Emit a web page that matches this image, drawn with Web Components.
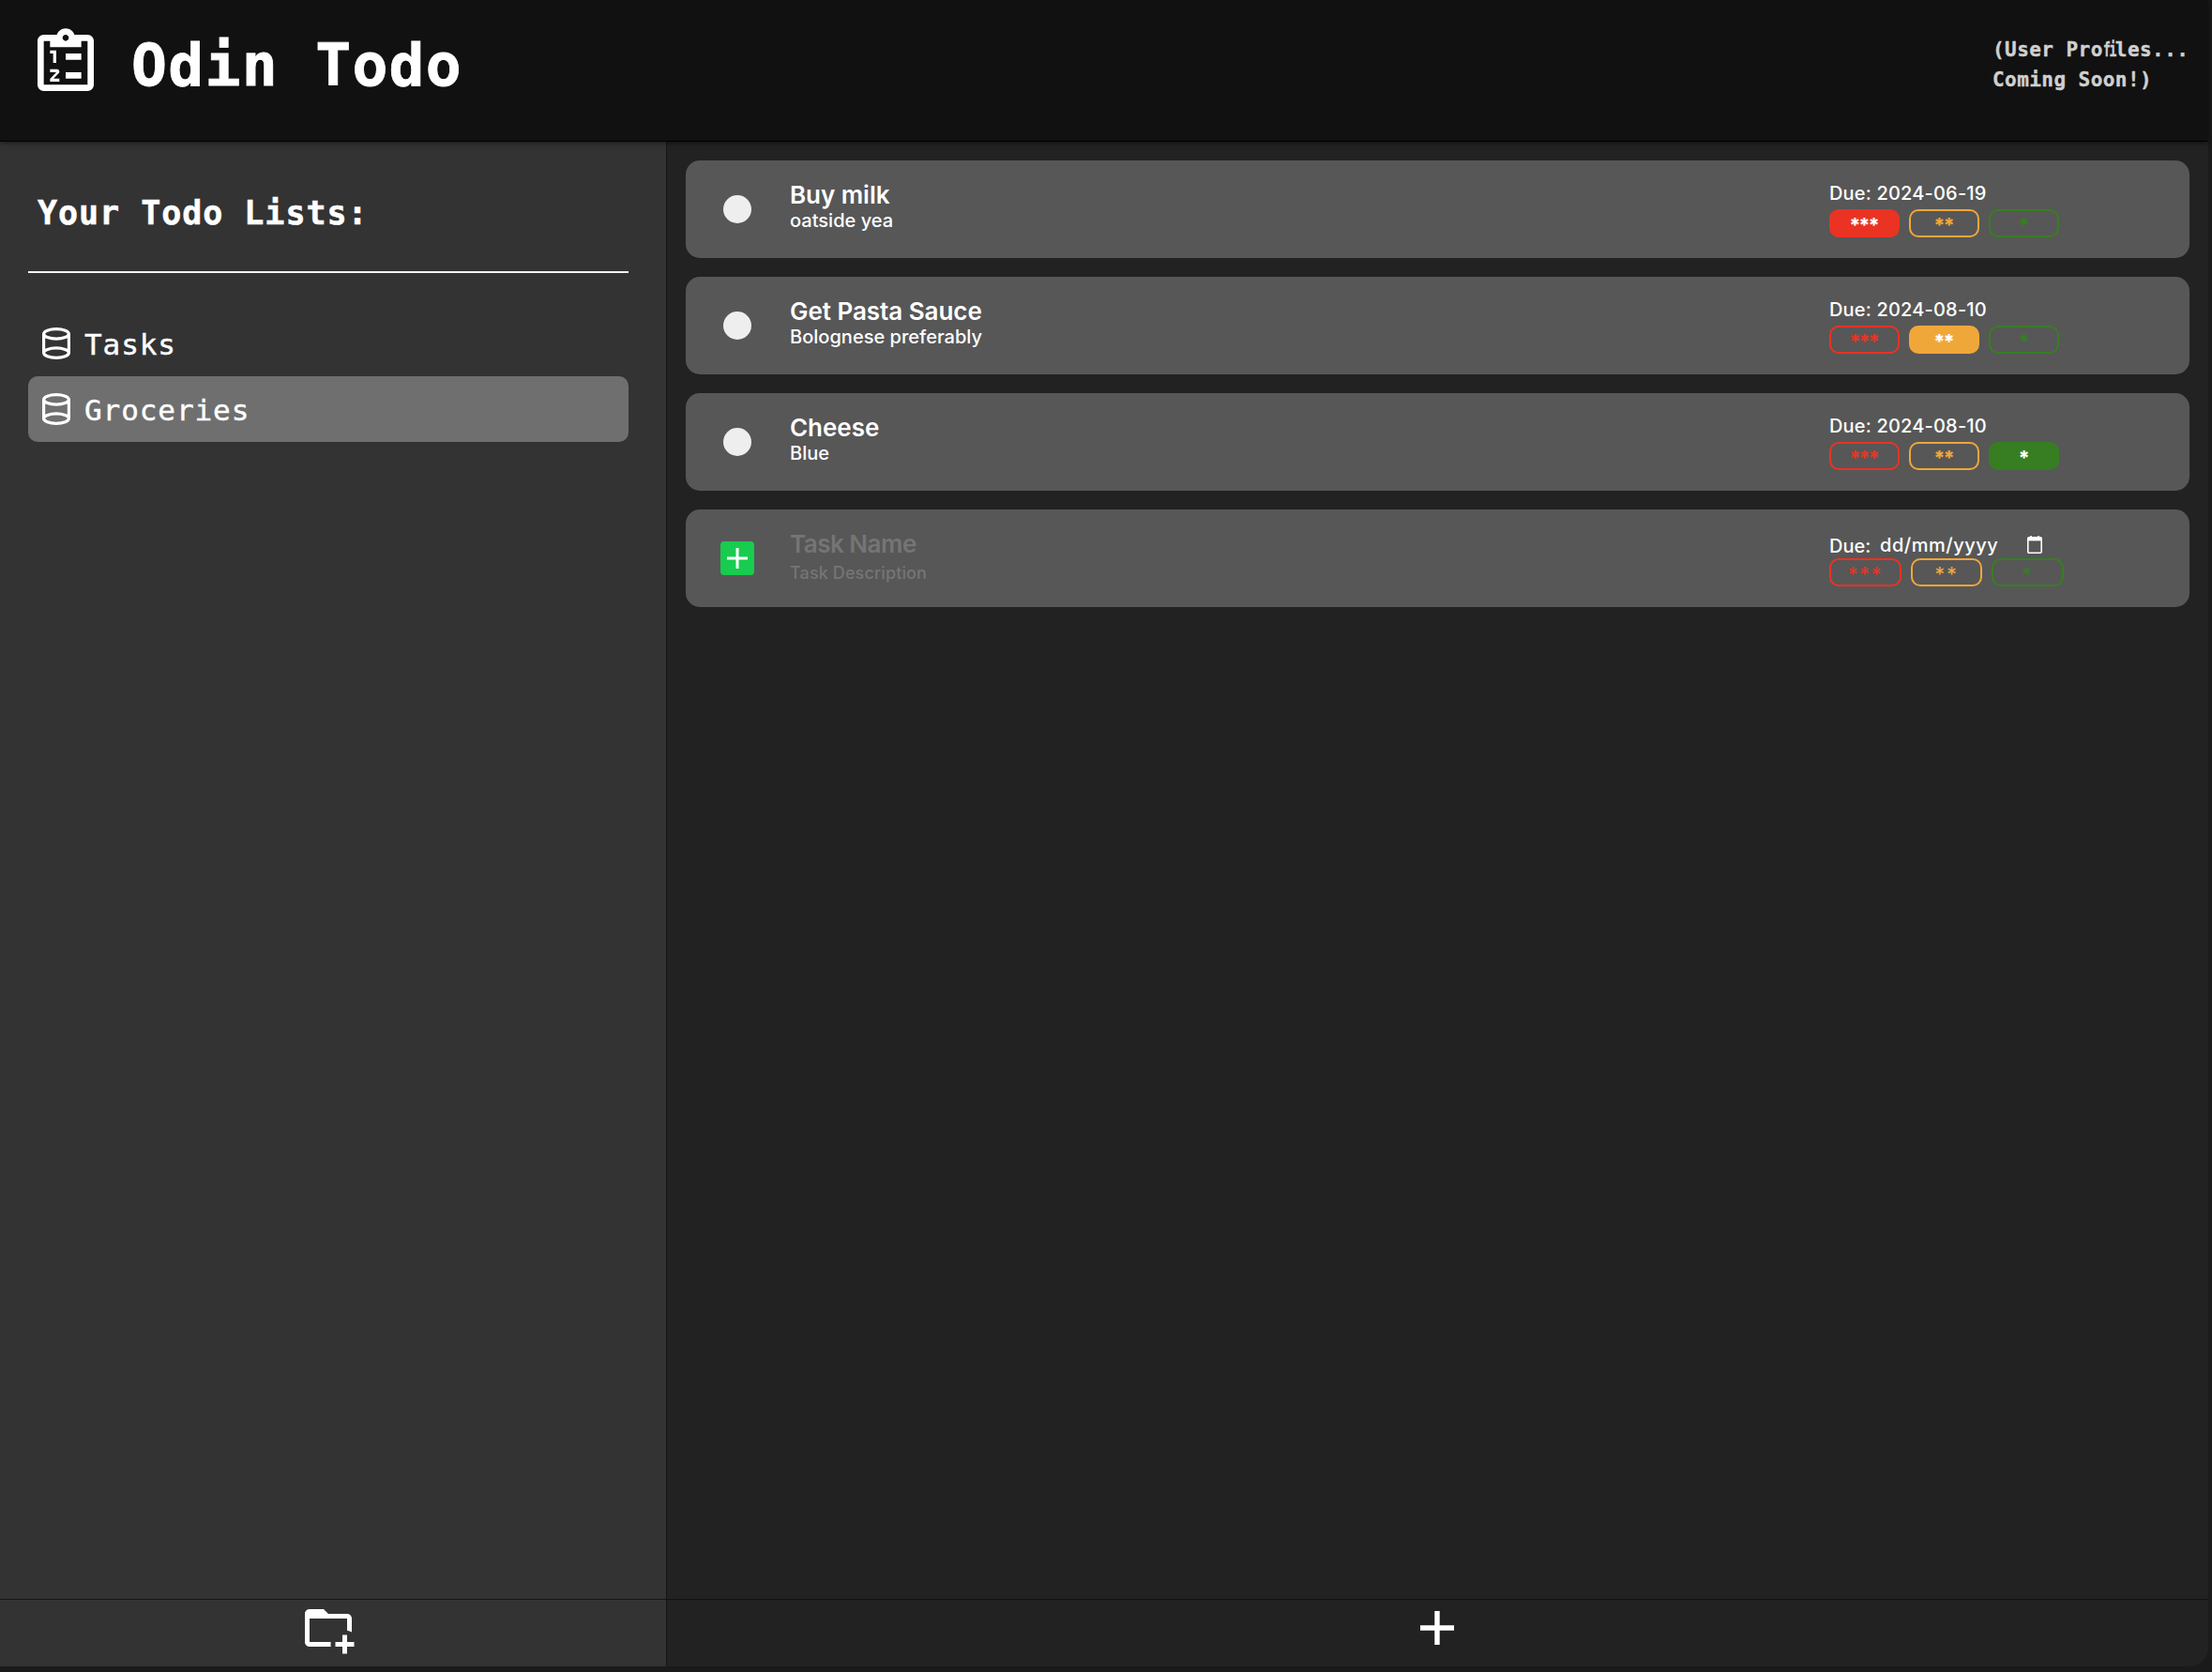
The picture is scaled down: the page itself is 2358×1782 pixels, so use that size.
<!DOCTYPE html>
<html lang="en">
<head>
<meta charset="utf-8">
<title>Odin Todo</title>
<style>
  html, body { margin: 0; height: 100%; background: #1a1a1b; overflow: hidden; }
</style>
</head>
<body>
<todo-app></todo-app>
<script>
const define = (name, html, setup) => {
  const template = document.createElement('template');
  template.innerHTML = html;
  customElements.define(name, class extends HTMLElement {
    connectedCallback() {
      if (this.shadowRoot) return;
      const root = this.attachShadow({ mode: 'open' });
      root.append(template.content.cloneNode(true));
      if (setup) setup(this, root);
    }
  });
};

define('app-header', `
<style>
  :host { display: flex; align-items: flex-start; justify-content: space-between; box-sizing: border-box;
    height: 151px; padding: 0 20px 0 30px; background: #111; border-bottom: 1px solid #000;
    box-shadow: 0 1px 6px rgba(0,0,0,.55); position: relative; z-index: 1; }
  .brand { display: flex; gap: 30px; padding-top: 27px; }
  svg { width: 80px; height: 80px; fill: #fff; flex: none; }
  h1 { margin: 0; padding-top: 13px; font: 700 63px/60px "DejaVu Sans Mono", monospace; letter-spacing: 1.3px; color: #fff; white-space: nowrap; -webkit-text-stroke: .8px #fff; }
  p { margin: 0; padding-top: 37px; width: 210px; font: 700 21px/32px "DejaVu Sans Mono", monospace;
    letter-spacing: .44px; color: #d0d0d0; white-space: nowrap; -webkit-text-stroke: .4px #d0d0d0; }
  .lig { display: inline-block; width: 13.08px; letter-spacing: -2px; transform: scaleX(.62); transform-origin: 0 0; }
</style>
<div class="brand">
  <svg viewBox="0 0 24 24"><path d="M19 3H14.82C14.4 1.84 13.3 1 12 1S9.6 1.84 9.18 3H5C3.9 3 3 3.9 3 5V19C3 20.1 3.9 21 5 21H19C20.1 21 21 20.1 21 19V5C21 3.9 20.1 3 19 3M12 3C12.55 3 13 3.45 13 4S12.55 5 12 5 11 4.55 11 4 11.45 3 12 3M7 7H17V5H19V19H5V5H7V7M12 17V15H17V17H12M12 11V9H17V11H12M8 12V9H7V8H9V12H8M9.25 14C9.66 14 10 14.34 10 14.75C10 14.95 9.92 15.14 9.79 15.27L8.12 17H10V18H7V17.08L9 15H7V14H9.25"/></svg>
  <h1>Odin Todo</h1>
</div>
<p>(User Pro<span class="lig">fi</span>les...<br>Coming Soon!)</p>
`);

define('list-item', `
<style>
  :host { display: flex; align-items: center; box-sizing: border-box; height: 70px; padding: 0 15px; gap: 15px;
    border-radius: 10px; font: 400 31px/70px "DejaVu Sans Mono", monospace; letter-spacing: .92px; color: #fff; -webkit-text-stroke: .4px #fff; }
  :host([selected]) { background: #6f6f6f; }
  svg { width: 30px; height: 34px; fill: none; stroke: #fff; stroke-width: 3.2; flex: none; }
  span { padding: 1px 0 0; }
</style>
<svg viewBox="0 0 30 34"><ellipse cx="15" cy="6.9" rx="13.4" ry="5.2"/><path d="M1.6 6.9V27.1C1.6 30 7.6 32.3 15 32.3S28.4 30 28.4 27.1V6.9M1.6 27.1C1.6 24.2 7.6 21.9 15 21.9S28.4 24.2 28.4 27.1"/></svg>
<span><slot></slot></span>
`);

define('side-bar', `
<style>
  :host { display: flex; flex-direction: column; background: #333; border-right: 1px solid #151515; box-sizing: border-box; width: 711px; }
  .lists { flex: 1; padding: 0 40px 0 30px; display: flex; flex-direction: column; }
  h2 { margin: 0; padding: 54px 10px 40px; font: 700 35px/44px "DejaVu Sans Mono", monospace; letter-spacing: .96px; color: #fff; border-bottom: 2px solid #f3f3f3; margin-bottom: 40px; -webkit-text-stroke: .5px #fff; }
  footer { height: 71px; border-top: 1px solid #151515; display: flex; justify-content: center; padding-right: 10px; }
  svg { width: 60px; height: 60px; fill: #fff; }
</style>
<div class="lists">
  <h2>Your Todo Lists:</h2>
  <slot></slot>
</div>
<footer><svg viewBox="0 0 24 24"><path d="M13 19C13 19.34 13.04 19.67 13.09 20H4C2.9 20 2 19.11 2 18V6C2 4.89 2.89 4 4 4H10L12 6H20C21.1 6 22 6.89 22 8V13.81C21.39 13.46 20.72 13.22 20 13.09V8H4V18H13.09C13.04 18.33 13 18.66 13 19M20 18V15H18V18H15V20H18V23H20V20H23V18H20Z"/></svg></footer>
`);

define('priority-pills', `
<style>
  :host { display: flex; gap: 10px; font: 800 21px/30px Inter, sans-serif; letter-spacing: -2px; }
  b { box-sizing: border-box; width: 75px; height: 30px; border: 2px solid var(--c); border-radius: 10px; color: var(--c);
    text-align: center; line-height: 31px; font-weight: inherit; text-indent: -2px; }
  .high { --c: #ea3323; } .mid { --c: #f0a73a; } .low { --c: #377e22; }
  b.on { background: var(--c); color: #fff; }
  :host([draft]) { font-weight: 500; letter-spacing: 1.6px; }
  :host([draft]) b { width: 76.6px; text-indent: 0; }
</style>
<b class="high">***</b><b class="mid">**</b><b class="low">*</b>
`, (host, root) => {
  const on = root.querySelector('.' + (host.getAttribute('level') || 'none'));
  if (on) on.classList.add('on');
});

const cardStyle = `
  :host { display: flex; align-items: flex-start; box-sizing: border-box; height: 104px; background: #575757; border-radius: 15px;
    color: #fff; font-family: Inter, sans-serif; white-space: nowrap; }
  .mark { width: 111px; height: 104px; box-sizing: border-box; padding-right: 1px; display: flex; align-items: center; justify-content: center; }
  .text { flex: 1; }
  .meta { width: 384px; }
`;

define('task-card', `
<style>${cardStyle}
  i { width: 30px; height: 30px; border-radius: 50%; background: #eee; }
  .text { padding-top: 22px; }
  .name { font-size: 26px; font-weight: 600; line-height: 30px; letter-spacing: -.04px; }
  .desc { font-size: 20px; font-weight: 500; line-height: 25px; letter-spacing: .02px; }
  .meta { padding-top: 20px; }
  .due { font-size: 20px; font-weight: 500; line-height: 30px; letter-spacing: .18px; margin-bottom: 2px; }
</style>
<div class="mark"><i></i></div>
<div class="text"><div class="name"><slot></slot></div><div class="desc"><slot name="desc"></slot></div></div>
<div class="meta"><div class="due">Due: <slot name="due"></slot></div></div>
`, (host, root) => {
  const pills = document.createElement('priority-pills');
  pills.setAttribute('level', host.getAttribute('level'));
  root.querySelector('.meta').append(pills);
});

define('task-draft', `
<style>${cardStyle}
  .add { width: 36px; height: 36px; border-radius: 4px; background: #18cc4f; display: flex; align-items: center; justify-content: center; }
  .add svg { width: 22px; height: 22px; stroke: #fff; stroke-width: 3; }
  .text { padding-top: 22px; color: #757575; }
  .name { font-size: 26px; font-weight: 600; line-height: 30px; letter-spacing: -.5px; margin-bottom: 3px; }
  .desc { font-size: 18px; font-weight: 500; line-height: 25px; letter-spacing: .12px; }
  .meta { padding-top: 26px; }
  .due { display: flex; font-size: 20px; font-weight: 500; line-height: 26px; height: 26px; }
  .due span { width: 54px; letter-spacing: 0; }
  .due time { width: 157px; letter-spacing: .52px; margin-top: -1px; }
  .due svg { width: 16px; height: 19px; margin-top: 2px; fill: none; stroke: #fff; stroke-width: 1.6; }
</style>
<div class="mark"><div class="add"><svg viewBox="0 0 22 22"><path d="M11 0V22M0 11H22"/></svg></div></div>
<div class="text"><div class="name">Task Name</div><div class="desc">Task Description</div></div>
<div class="meta">
  <div class="due"><span>Due:</span><time>dd/mm/yyyy</time><svg viewBox="0 0 16 19"><path d="M2 1.8H14A1.2 1.2 0 0 1 15.2 3V17A1.2 1.2 0 0 1 14 18.2H2A1.2 1.2 0 0 1 .8 17V3A1.2 1.2 0 0 1 2 1.8Z"/><path d="M.8 2H15.2V5.4H.8Z" fill="#fff" stroke="none"/><path d="M4 0V3M12 0V3"/></svg></div>
  <priority-pills draft></priority-pills>
</div>
`);

define('task-board', `
<style>
  :host { display: flex; flex-direction: column; background: #222; flex: 1; border-bottom-right-radius: 20px; }
  .cards { flex: 1; padding: 20px; display: flex; flex-direction: column; gap: 20px; }
  footer { height: 71px; border-top: 1px solid #121212; display: flex; justify-content: center; padding-right: 1px; }
  svg { width: 36px; height: 36px; margin-top: 12px; stroke: #fff; stroke-width: 5.4; }
</style>
<div class="cards"><slot></slot></div>
<footer><svg viewBox="0 0 36 36"><path d="M18 0V36M0 18H36"/></svg></footer>
`);

define('todo-app', `
<style>
  :host { display: flex; flex-direction: column; width: 2354px; height: 1776px; }
  main { flex: 1; display: flex; min-height: 0; }
</style>
<app-header></app-header>
<main>
  <side-bar>
    <list-item>Tasks</list-item>
    <list-item selected>Groceries</list-item>
  </side-bar>
  <task-board>
    <task-card level="high">Buy milk<span slot="desc">oatside yea</span><span slot="due">2024-06-19</span></task-card>
    <task-card level="mid">Get Pasta Sauce<span slot="desc">Bolognese preferably</span><span slot="due">2024-08-10</span></task-card>
    <task-card level="low">Cheese<span slot="desc">Blue</span><span slot="due">2024-08-10</span></task-card>
    <task-draft></task-draft>
  </task-board>
</main>
`);
</script>
</body>
</html>
